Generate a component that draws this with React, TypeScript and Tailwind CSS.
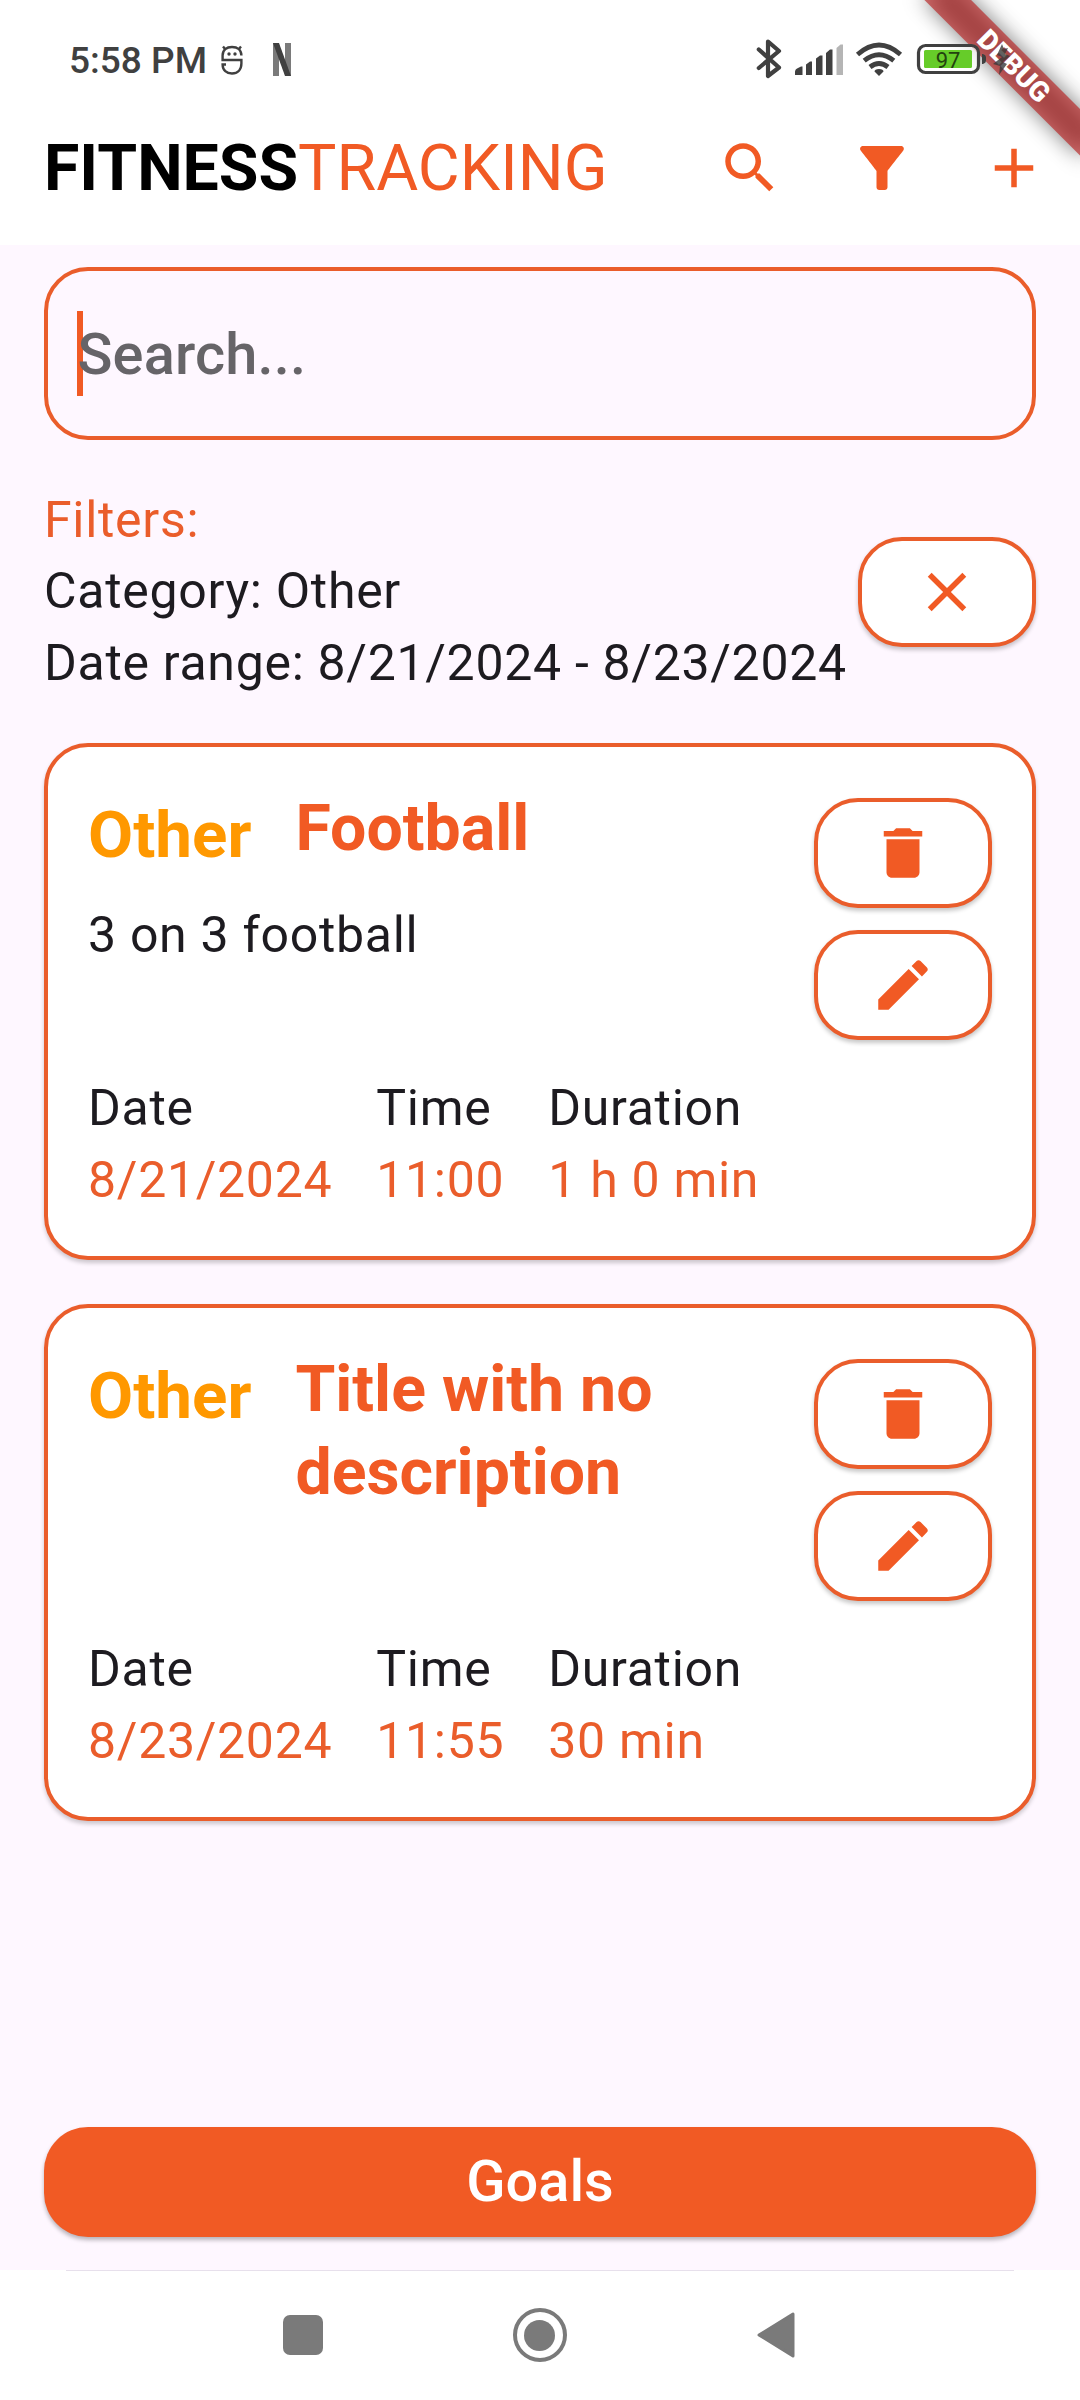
import React from "react";

const DeleteIcon = () => (
  <svg viewBox="0 0 24 24" className="size-[66px] fill-[#f15a24]">
    <path d="M6 19c0 1.1.9 2 2 2h8c1.1 0 2-.9 2-2V7H6v12zM19 4h-3.500l-1-1h-5l-1 1H5v2h14V4z" />
  </svg>
);

const EditIcon = () => (
  <svg viewBox="0 0 24 24" className="size-[66px] fill-[#f15a24]">
    <path d="M3 17.250V21h3.750L17.810 9.940l-3.750-3.750L3 17.250zM20.710 7.040c.39-.39.39-1.020 0-1.410l-2.340-2.340c-.39-.39-1.020-.39-1.410 0l-1.830 1.830 3.750 3.750 1.830-1.830z" />
  </svg>
);

const CloseIcon = () => (
  <svg viewBox="0 0 24 24" className="size-[66px] fill-[#f15a24]">
    <path d="M19 6.410L17.590 5 12 10.590 6.410 5 5 6.410 10.590 12 5 17.590 6.410 19 12 13.410 17.590 19 19 17.590 13.410 12z" />
  </svg>
);

function PillButton({ children, label }: { children: React.ReactNode; label: string }) {
  return (
    <button
      aria-label={label}
      className="flex h-[110px] w-[178px] shrink-0 items-center justify-center rounded-[44px] border-4 border-[#ea5d2b] bg-white shadow-[0_3px_4px_rgba(0,0,0,0.22)]"
    >
      {children}
    </button>
  );
}

function StatusBar() {
  return (
    <div className="flex h-[92px] w-full items-center pt-[27px] pl-[69px] text-[#404040]">
      <span className="w-[152px] pt-[2px] text-[37px] leading-[44px] font-medium whitespace-nowrap">5:58 PM</span>
      <svg viewBox="0 0 22 30" className="h-[30px] w-[22px]" fill="none" stroke="#404040" strokeWidth="2.400">
        <path d="M20.400 10.500C20.400 5 16.500 2 11 2S1.600 5 1.600 10.500V15h18.800v3.500c0 6.500-3.900 10-9.400 10s-9.400-3.500-9.400-9H5" />
        <path d="M4.500 4.500L2 1.500M17.500 4.500l2.500-3" />
        <circle cx="8" cy="9" r="1.700" fill="#404040" stroke="none" />
        <circle cx="14" cy="9" r="1.700" fill="#404040" stroke="none" />
      </svg>
      <svg viewBox="0 0 18 33" className="ml-[30px] h-[33px] w-[18px]">
        <path d="M0 0h6v33H0zM12 0h6v33h-6z" fill="#7a7a7a" />
        <path d="M0 0h6l12 33h-6z" fill="#404040" />
      </svg>
    </div>
  );
}

function StatusIcons() {
  return (
    <div className="absolute top-[36px] left-[750px] z-20">
      <svg viewBox="750 36 270 46" width="270" height="46">
        <path d="M758.800 49.500L779 67.500 768 76V41.500L779 51 758.800 68" fill="none" stroke="#404040" strokeWidth="4.200" strokeLinejoin="round" strokeLinecap="round" />
        <g fill="#404040">
          <path d="M795 75v-3q0-3 3-4l3-1.500h1.500V75zM806 75V64.500l4-3h2V75zM816 75V58.500l4-3h2.500V75zM826 75V53l4-3.500h2.500V75z" />
          <path d="M836.500 75V48l4-3.500h2.500V75z" fill="#b5b5b5" />
          <path d="M879 76l-4.500-4.500q0-2.500 4.500-2.500t4.500 2.500z" />
        </g>
        <g fill="none" stroke="#404040" strokeWidth="4.800">
          <path d="M857.500 54.500q21.500-19 43 0M864.200 60.700q14.800-12 29.600 0M870 67q9-7 18 0" />
        </g>
        <rect x="918.500" y="45.500" width="60" height="27" rx="7" fill="#fff" fillOpacity=".7" stroke="#404040" strokeWidth="3.200" />
        <rect x="924" y="50" width="48" height="18" rx="1.500" fill="#66cc29" />
        <path d="M982 54h1q3 1 3 3v4q0 2-3 3h-1z" fill="#404040" />
        <text x="948" y="67.500" fontSize="22" textAnchor="middle" fill="#23420f">97</text>
      </svg>
    </div>
  );
}

function ChargingBolt() {
  return (
    <svg viewBox="0 0 20 32" className="absolute top-[44px] left-[992px] z-20 h-[32px] w-[20px] fill-[#3a3a3a]/80">
      <path d="M10 0L5 11l5 2-9 7 7 2-1 9 8-11-4-2 7-6-5-2 3-6-4 1z" />
    </svg>
  );
}

function DebugBanner() {
  return (
    <div className="pointer-events-none absolute top-0 right-0 z-10 h-[240px] w-[240px] overflow-hidden">
      <div className="absolute top-[77px] left-[130px] h-[33px] w-[220px] origin-[110px_-77px] rotate-45">
        <div className="absolute inset-0 bg-black/50 blur-[10.9px]" />
        <div className="absolute inset-0 flex items-center justify-center bg-[#b71c1c]/63 text-[28px] leading-none font-black text-white">
          DEBUG
        </div>
      </div>
    </div>
  );
}

function Header() {
  return (
    <header className="flex h-[153px] items-start pl-[44px]">
      <h1 className="w-[673px] pt-[38px] text-[64.400px] leading-[77px] whitespace-nowrap">
        <span className="font-bold text-black">FITNESS</span>
        <span className="text-[#f15a24]">TRACKING</span>
      </h1>
      <div className="flex gap-[66px] pt-[43px]">
        <svg viewBox="0 0 24 24" className="size-[66px] fill-[#f15a24]">
          <path d="M15.500 14h-.79l-.28-.27C15.410 12.590 16 11.110 16 9.500 16 5.910 13.090 3 9.500 3S3 5.910 3 9.500 5.910 16 9.500 16c1.610 0 3.090-.59 4.230-1.570l.27.28v.79l5 4.990L20.490 19l-4.990-5zm-6 0C7.010 14 5 11.990 5 9.500S7.010 5 9.500 5 14 7.010 14 9.500 11.990 14 9.500 14z" />
        </svg>
        <svg viewBox="0 0 24 24" className="size-[66px] fill-[#f15a24]">
          <path d="M4.250 5.610C6.270 8.200 10 13 10 13v6c0 .55.45 1 1 1h2c.55 0 1-.45 1-1v-6s3.720-4.800 5.740-7.390c.51-.66.04-1.610-.79-1.610H5.040c-.83 0-1.300.95-.79 1.610z" />
        </svg>
        <svg viewBox="0 0 24 24" className="size-[66px] fill-[#f15a24]">
          <path d="M19 13h-6v6h-2v-6H5v-2h6V5h2v6h6v2z" />
        </svg>
      </div>
    </header>
  );
}

type Workout = {
  category: string;
  title: string;
  description: string;
  date: string;
  time: string;
  duration: string;
};

const workouts: Workout[] = [
  { category: "Other", title: "Football", description: "3 on 3 football", date: "8/21/2024", time: "11:00", duration: "1 h 0 min" },
  { category: "Other", title: "Title with no description", description: "", date: "8/23/2024", time: "11:55", duration: "30 min" },
];

function Stat({ label, value }: { label: string; value: string }) {
  return (
    <div>
      <div className="text-[#1d1b20]">{label}</div>
      <div className="text-[#ea5d2b]">{value}</div>
    </div>
  );
}

function WorkoutCard({ workout }: { workout: Workout }) {
  return (
    <article className="flex h-[517px] flex-col justify-between rounded-[44px] border-4 border-[#ea5d2b] bg-white px-[40px] pt-[51px] pb-[40px] shadow-[0_3px_4px_rgba(0,0,0,0.2)]">
      <div className="flex justify-between">
        <div>
          <div className="flex items-start gap-[44px] font-bold">
            <span className="-mt-[2px] text-[65.500px] leading-[77px] text-[#ff9800]">{workout.category}</span>
            <h2 className="-mt-[11px] w-[430px] text-[64.400px] leading-[83px] text-[#f15a24]">{workout.title}</h2>
          </div>
          <p className="mt-[26px] text-[50px] leading-[72px] tracking-[0.700px] text-[#1d1b20]">{workout.description}</p>
        </div>
        <div className="flex h-[242px] flex-col gap-[22px]">
          <PillButton label="Delete">
            <DeleteIcon />
          </PillButton>
          <PillButton label="Edit">
            <EditIcon />
          </PillButton>
        </div>
      </div>
      <div className="flex gap-[44px] text-[50px] leading-[72px] tracking-[0.700px]">
        <Stat label="Date" value={workout.date} />
        <Stat label="Time" value={workout.time} />
        <Stat label="Duration" value={workout.duration} />
      </div>
    </article>
  );
}

function NavBar() {
  return (
    <nav className="flex h-[130px] flex-col items-center bg-white">
      <div className="h-px w-[948px] bg-[#e7e0ec]" />
      <div className="flex w-full items-center pt-[37px] pl-[283px]">
        <div className="size-[40px] rounded-[7px] bg-[#7a7a7a]" />
        <div className="ml-[189.500px] flex size-[54px] items-center justify-center rounded-full border-[4.5px] border-[#7a7a7a]">
          <div className="size-[31px] rounded-full bg-[#7a7a7a]" />
        </div>
        <svg viewBox="0 0 38 46" className="ml-[190.500px] h-[46px] w-[38px]">
          <path d="M2 23L36 2v42z" fill="#7a7a7a" stroke="#7a7a7a" strokeWidth="3" strokeLinejoin="round" />
        </svg>
      </div>
    </nav>
  );
}

export default function App() {
  return (
    <div className="relative flex h-[2400px] w-[1080px] flex-col overflow-hidden bg-white font-[Roboto,sans-serif]">
      <StatusBar />
      <Header />
      <main className="flex flex-1 flex-col bg-[#fef7ff] px-[44px] pt-[22px]">
        <div className="flex h-[173px] items-center rounded-[44px] border-4 border-[#ea5d2b] pl-[29px]">
          <div className="h-[85px] w-[5.5px] bg-[#f15a24]" />
          <span className="-ml-[5px] pt-[1px] text-[57.75px] font-medium tracking-[0.150px] text-[#666468]">Search...</span>
        </div>
        <section className="mt-[43px] flex h-[217px] items-center justify-between">
          <div className="pt-[1px] text-[50px] leading-[71.5px] tracking-[0.700px] whitespace-nowrap text-[#1d1b20]">
            <p className="text-[#ea5d2b]">Filters:</p>
            <p>Category: Other</p>
            <p>Date range: 8/21/2024 - 8/23/2024</p>
          </div>
          <PillButton label="Clear filters">
            <CloseIcon />
          </PillButton>
        </section>
        <section className="mt-[43px] flex flex-col gap-[44px]">
          {workouts.map((w) => (
            <WorkoutCard key={w.date} workout={w} />
          ))}
        </section>
        <button className="mt-auto mb-[33px] h-[110px] rounded-[44px] bg-[#f15a24] pb-[2px] text-[57.75px] leading-[80px] font-medium text-white shadow-[0_3px_4px_rgba(0,0,0,0.28)]">
          Goals
        </button>
      </main>
      <NavBar />
      <DebugBanner />
      <StatusIcons />
      <ChargingBolt />
    </div>
  );
}
